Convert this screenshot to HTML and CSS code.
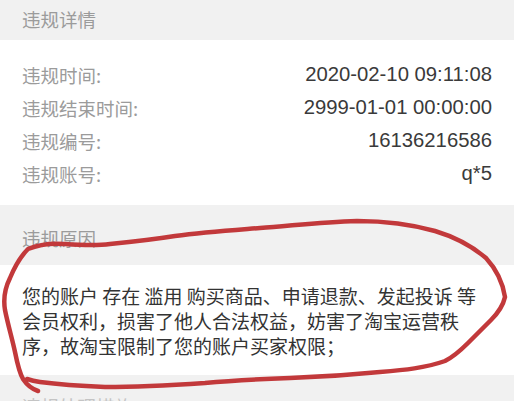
FILE: index.html
```html
<!DOCTYPE html>
<html lang="zh">
<head>
<meta charset="utf-8">
<link rel="stylesheet" href="styles.css">
</head>
<body>
<div class="page">
  <div class="sec-title">违规详情</div>
  <div class="info">
    <div class="row"><span class="label">违规时间:</span><span class="value">2020-02-10 09:11:08</span></div>
    <div class="row"><span class="label">违规结束时间:</span><span class="value">2999-01-01 00:00:00</span></div>
    <div class="row"><span class="label">违规编号:</span><span class="value">16136216586</span></div>
    <div class="row"><span class="label">违规账号:</span><span class="value">q*5</span></div>
  </div>
  <div class="sec-title tall">违规原因</div>
  <div class="reason">您的账户 存在 滥用 购买商品、申请退款、发起投诉 等<br>会员权利，损害了他人合法权益，妨害了淘宝运营秩<br>序，故淘宝限制了您的账户买家权限；</div>
  <div class="sec-title next">违规处理措施</div>
  <svg class="mark" width="514" height="401" viewBox="0 0 514 401">
    <path d="M38 391 C32 389 27 385 23 379 C19 372 17 362 15 352 C12 338 8 325 5 310 C3 298 5 288 10 278 C15 266 21 256 28 249 C40 244 52 243 64 244 C80 245 95 246 110 244 C130 242 150 240 175 236 C205 232 235 230 260 228 C290 226 320 222 357 221 C385 221 410 224 435 231 C455 237 472 246 486 258 C497 270 503 284 505 297 C503 306 498 313 491 320 C483 328 476 335 468 343 C461 350 455 356 445 361 C425 368 405 370 380 372 C350 375 320 377 290 378 C260 379 235 380 205 383 C175 385 140 387 105 387 C80 386 55 384 40 382 C33 381 30 380 27 379" />
  </svg>
</div>
</body>
</html>
```

FILE: styles.css
```css
html, body {
  margin: 0;
  padding: 0;
  background: #ffffff;
}
.page {
  position: relative;
  width: 514px;
  height: 401px;
  overflow: hidden;
  font-family: "Noto Sans CJK SC", "Noto Sans", sans-serif;
}
.sec-title {
  background: #f1f1f1;
  color: #9b9b9b;
  font-size: 18.5px;
  height: 40px;
  line-height: 38px;
  padding-left: 22px;
}
.sec-title.tall {
  height: 60px;
  line-height: 28px;
  padding-top: 19px;
  box-sizing: border-box;
}
.sec-title.next {
  height: 26px;
  line-height: 62px;
  overflow: hidden;
  color: #c4c4c4;
}
.info {
  padding: 18px 22px 15px 22px;
}
.row {
  display: flex;
  justify-content: space-between;
  align-items: center;
  height: 33px;
  font-size: 18.5px;
}
.label {
  color: #9b9b9b;
}
.value {
  color: #3a3a3a;
  font-family: "Liberation Sans", "Noto Sans CJK SC", sans-serif;
  font-size: 20.3px;
}
.reason {
  padding: 17.5px 22px;
  font-size: 19px;
  line-height: 25px;
  color: #333333;
  white-space: nowrap;
}
.mark {
  position: absolute;
  left: 0;
  top: 0;
  pointer-events: none;
}
.mark path {
  fill: none;
  stroke: #c2393b;
  stroke-width: 4.5;
  stroke-linecap: round;
  stroke-linejoin: round;
}
```
